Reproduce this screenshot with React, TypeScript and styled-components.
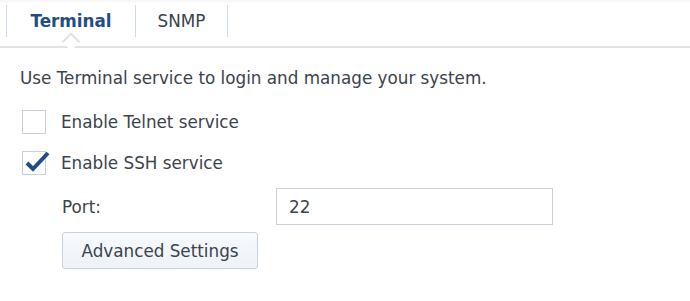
import React from 'react';
import styled, { createGlobalStyle } from 'styled-components';

const GlobalStyle = createGlobalStyle`
  html, body {
    margin: 0;
    padding: 0;
    background: #ffffff;
  }
  body {
    font-family: 'DejaVu Sans', Verdana, sans-serif;
    color: #3a434c;
  }
`;

const Page = styled.div`
  width: 690px;
  height: 301px;
  overflow: hidden;
  border-top: 2px solid #f7f7f7;
  box-sizing: border-box;
`;

const TabBar = styled.div`
  display: flex;
  height: 46px;
  padding: 3px 0 0 6px;
  box-sizing: border-box;
  border-bottom: 2px solid #e2e2e2;
  position: relative;
`;

const Tab = styled.div<{ active?: boolean; width: number }>`
  position: relative;
  width: ${(p) => p.width}px;
  height: 32px;
  display: flex;
  align-items: center;
  justify-content: center;
  font-size: 16.8px;
  font-weight: ${(p) => (p.active ? 700 : 400)};
  color: ${(p) => (p.active ? '#1f4e87' : '#3a434c')};
  border-left: 1px solid #cddbe8;
  box-sizing: border-box;

  &:last-child {
    border-right: 1px solid #cddbe8;
  }

  ${(p) =>
    p.active &&
    `
    &::after {
      content: '';
      position: absolute;
      left: 50%;
      bottom: -11px;
      width: 11px;
      height: 11px;
      background: #ffffff;
      border-left: 2px solid #e2e2e2;
      border-top: 2px solid #e2e2e2;
      transform: translateX(-50%) rotate(45deg);
    }
  `}
`;

const Content = styled.div`
  display: flex;
  flex-direction: column;
  padding: 19px 0 0 20px;
`;

const Description = styled.div`
  font-size: 16.8px;
  line-height: 22px;
  color: #3a434c;
  margin-bottom: 21px;
`;

const CheckRow = styled.label`
  display: flex;
  align-items: center;
  gap: 15px;
  height: 24px;
  padding-left: 2px;
  margin-bottom: 17px;
  font-size: 16.8px;
  color: #3a434c;
`;

const Box = styled.span`
  position: relative;
  width: 24px;
  height: 24px;
  box-sizing: border-box;
  border: 1px solid #c6d1dc;
  background: #ffffff;
  flex-shrink: 0;

  svg {
    position: absolute;
    left: 2px;
    top: -3px;
  }
`;

const FieldRow = styled.div`
  display: flex;
  align-items: center;
  padding-left: 42px;
  height: 37px;
  margin-top: -4px;
`;

const FieldLabel = styled.div`
  width: 214px;
  font-size: 16.8px;
  color: #3a434c;
`;

const Input = styled.input`
  width: 277px;
  height: 37px;
  box-sizing: border-box;
  border: 1px solid #c6d1dc;
  padding: 0 12px;
  font-family: inherit;
  font-size: 16.8px;
  color: #3a434c;
  outline: none;
`;

const Button = styled.button`
  margin: 7px 0 0 42px;
  width: 196px;
  height: 37px;
  border: 1px solid #c6d1dc;
  border-radius: 3px;
  background: linear-gradient(#f6f9fc, #eef3f8);
  font-family: inherit;
  font-size: 16.8px;
  color: #3a434c;
  cursor: pointer;
`;

function Checkbox({ checked }: { checked?: boolean }) {
  return (
    <Box>
      {checked && (
        <svg width="26" height="26" viewBox="0 0 26 26">
          <path d="M2 14 L8 20 L23 4" fill="none" stroke="#1f4e87" strokeWidth="4" strokeLinejoin="miter" />
        </svg>
      )}
    </Box>
  );
}

export default function App() {
  return (
    <Page>
      <GlobalStyle />
      <TabBar>
        <Tab active width={129}>Terminal</Tab>
        <Tab width={93}>SNMP</Tab>
      </TabBar>
      <Content>
        <Description>Use Terminal service to login and manage your system.</Description>
        <CheckRow>
          <Checkbox />
          Enable Telnet service
        </CheckRow>
        <CheckRow>
          <Checkbox checked />
          Enable SSH service
        </CheckRow>
        <FieldRow>
          <FieldLabel>Port:</FieldLabel>
          <Input defaultValue="22" />
        </FieldRow>
        <div>
          <Button>Advanced Settings</Button>
        </div>
      </Content>
    </Page>
  );
}
